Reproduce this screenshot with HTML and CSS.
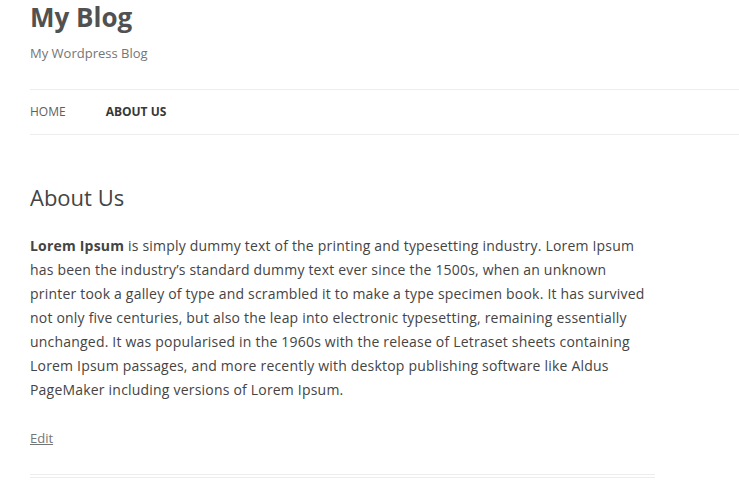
FILE: index.html
```html
<!DOCTYPE html>
<html lang="en">
<head>
<meta charset="utf-8">
<title>About Us | My Blog</title>
<link rel="stylesheet" href="styles.css">
</head>
<body>
<div class="site">
  <header class="site-header">
    <h1 class="site-title">My Blog</h1>
    <h2 class="site-description">My Wordpress Blog</h2>
    <nav class="main-navigation">
      <ul class="nav-menu">
        <li class="menu-item"><a href="#">Home</a></li>
        <li class="menu-item current"><a href="#">About Us</a></li>
      </ul>
    </nav>
  </header>
  <main class="site-content">
    <article class="page">
      <h1 class="entry-title">About Us</h1>
      <div class="entry-content">
        <p><strong>Lorem Ipsum</strong> is simply dummy text of the printing and typesetting industry. Lorem Ipsum has been the industry’s standard dummy text ever since the 1500s, when an unknown printer took a galley of type and scrambled it to make a type specimen book. It has survived not only five centuries, but also the leap into electronic typesetting, remaining essentially unchanged. It was popularised in the 1960s with the release of Letraset sheets containing Lorem Ipsum passages, and more recently with desktop publishing software like Aldus PageMaker including versions of Lorem Ipsum.</p>
      </div>
      <footer class="entry-meta">
        <a class="edit-link" href="#">Edit</a>
      </footer>
    </article>
  </main>
</div>
</body>
</html>
```

FILE: styles.css
```css
html, body {
  margin: 0;
  padding: 0;
  background: #fff;
}

body {
  font-family: "Open Sans", "Liberation Sans", sans-serif;
  color: #444;
  font-size: 14px;
  line-height: 24px;
}

.site {
  padding-left: 30px;
}

.site-title {
  margin: 0;
  font-size: 26px;
  line-height: 34px;
  font-weight: 700;
  color: #515151;
}

.site-description {
  margin: 7px 0 0;
  font-size: 13px;
  line-height: 24px;
  font-weight: 400;
  color: #757575;
}

.main-navigation {
  margin-top: 24px;
  border-top: 1px solid #ededed;
  border-bottom: 1px solid #ededed;
}

.nav-menu {
  display: flex;
  margin: 0;
  padding: 0;
  list-style: none;
}

.menu-item {
  font-size: 12px;
  line-height: 44px;
  margin-right: 40px;
  text-transform: uppercase;
}

.menu-item a {
  color: #5e5e5e;
  text-decoration: none;
}

.menu-item.current a {
  color: #373737;
  font-weight: 700;
}

.site-content {
  width: 625px;
  padding-top: 49px;
}

.page {
  border-bottom: 4px double #ededed;
  padding-bottom: 24px;
}

.entry-title {
  margin: 0;
  font-size: 22px;
  line-height: 26.4px;
  font-weight: 400;
  color: #444;
}

.entry-content p {
  margin: 24px 0 0;
  font-size: 14px;
  line-height: 24px;
  letter-spacing: 0.2px;
}

.entry-content strong {
  font-weight: 700;
}

.entry-meta {
  margin-top: 24px;
  font-size: 13px;
  line-height: 24px;
}

.edit-link {
  color: #757575;
  text-decoration: underline;
}
```
